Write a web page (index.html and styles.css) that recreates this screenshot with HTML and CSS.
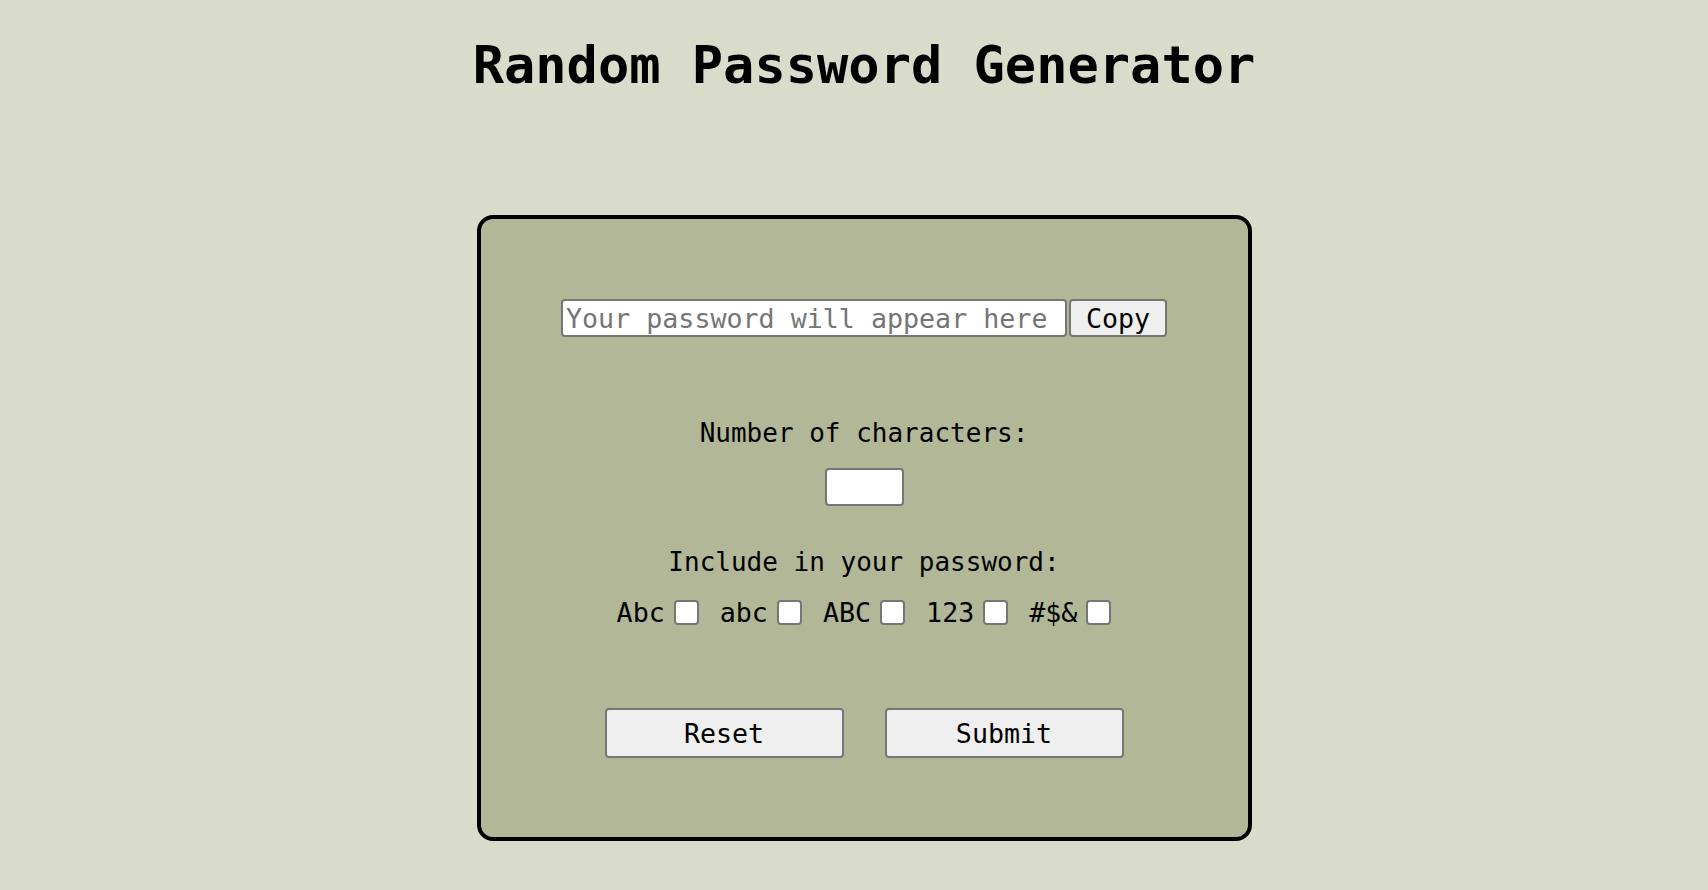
FILE: index.html
```html
<!DOCTYPE html>
<html lang="en">
<head>
<meta charset="utf-8">
<title>Random Password Generator</title>
<link rel="stylesheet" href="styles.css">
</head>
<body>
<main class="page">
  <h1 class="title">Random Password Generator</h1>
  <section class="card">
    <div class="output-row">
      <input class="password-output" type="text" placeholder="Your password will appear here" readonly>
      <button class="btn btn-copy" type="button">Copy</button>
    </div>
    <label class="field-label" for="length">Number of characters:</label>
    <input class="length-input" id="length" type="text">
    <p class="field-label include-label">Include in your password:</p>
    <div class="options">
      <label class="option">Abc<input class="check" type="checkbox"></label>
      <label class="option">abc<input class="check" type="checkbox"></label>
      <label class="option">ABC<input class="check" type="checkbox"></label>
      <label class="option">123<input class="check" type="checkbox"></label>
      <label class="option">#$&amp;<input class="check" type="checkbox"></label>
    </div>
    <div class="actions">
      <button class="btn btn-action" type="button">Reset</button>
      <button class="btn btn-action" type="button">Submit</button>
    </div>
  </section>
</main>
</body>
</html>
```
FILE: styles.css
```css
html, body {
  margin: 0;
  padding: 0;
}

body {
  background: #dadccb;
  font-family: "DejaVu Sans Mono", "Liberation Mono", monospace;
  color: #000;
}

.page {
  display: flex;
  flex-direction: column;
  align-items: center;
  padding-left: 20px;
  padding-top: 35px;
}

.title {
  margin: 0;
  font-size: 52px;
  line-height: 60px;
  font-weight: bold;
}

.card {
  box-sizing: border-box;
  width: 775px;
  margin-top: 120px;
  border: 4px solid #000;
  border-radius: 16px;
  background: #b2b798;
  padding: 80px 0 79px;
  display: flex;
  flex-direction: column;
  align-items: center;
  font-size: 26.67px;
}

.output-row {
  display: flex;
  align-items: center;
  gap: 2px;
}

.password-output {
  box-sizing: border-box;
  width: 506px;
  height: 38px;
  padding: 0 3px;
  border: 2px solid #767676;
  border-radius: 4px;
  background: #fff;
  font-family: inherit;
  font-size: 26.67px;
  color: #000;
  outline: none;
}

.password-output::placeholder {
  color: #757575;
}

.btn {
  box-sizing: border-box;
  border: 2px solid #767676;
  border-radius: 4px;
  background: #efefef;
  font-family: inherit;
  font-size: 26.67px;
  color: #000;
  padding: 0;
  cursor: pointer;
}

.btn-copy {
  width: 98px;
  height: 38px;
}

.field-label {
  display: block;
  margin: 81px 0 0;
  font-size: 26px;
  line-height: 31px;
}

.length-input {
  box-sizing: border-box;
  width: 79px;
  height: 38px;
  margin-top: 19px;
  border: 2px solid #767676;
  border-radius: 4px;
  background: #fff;
  font-family: inherit;
  font-size: 26.67px;
  outline: none;
}

.include-label {
  margin-top: 41px;
}

.options {
  display: flex;
  align-items: center;
  gap: 21px;
  margin-top: 19px;
  line-height: normal;
}

.option {
  display: flex;
  align-items: center;
  gap: 9px;
}

.check {
  appearance: none;
  -webkit-appearance: none;
  box-sizing: border-box;
  width: 25px;
  height: 25px;
  margin: 0;
  border: 2px solid #767676;
  border-radius: 4px;
  background: #fff;
}

.actions {
  display: flex;
  gap: 41px;
  margin-top: 80px;
}

.btn-action {
  width: 239px;
  height: 50px;
}
```
